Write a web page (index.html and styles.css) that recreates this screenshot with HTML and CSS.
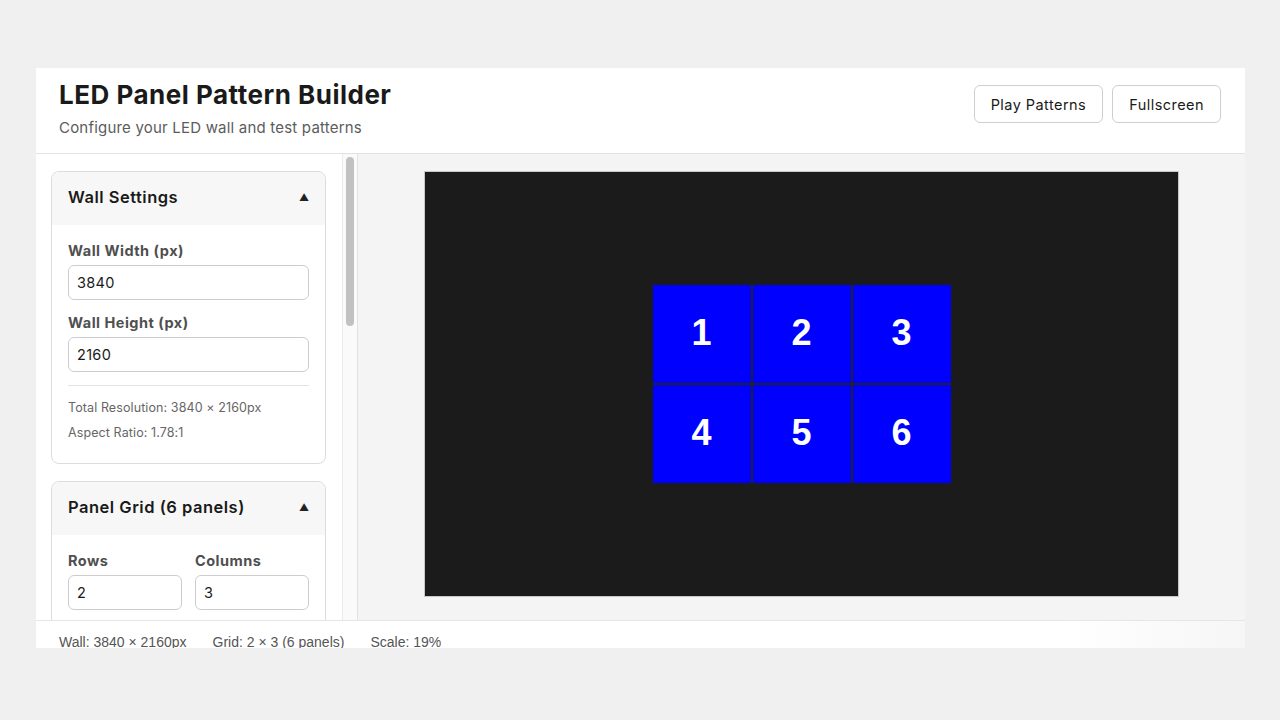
FILE: index.html
```html
<!DOCTYPE html>
<html lang="en">
<head>
<meta charset="utf-8">
<title>LED Panel Pattern Builder</title>
<link rel="stylesheet" href="styles.css">
</head>
<body>
<div class="app">
  <header class="topbar">
    <div class="titles">
      <h1>LED Panel Pattern Builder</h1>
      <p class="subtitle">Configure your LED wall and test patterns</p>
    </div>
    <div class="actions">
      <button class="btn">Play Patterns</button>
      <button class="btn">Fullscreen</button>
    </div>
  </header>
  <div class="workspace">
    <aside class="sidebar">
      <div class="sidebar-content">
        <section class="card">
          <div class="card-head"><h2>Wall Settings</h2><span class="caret">▲</span></div>
          <div class="card-body">
            <label class="field">
              <span class="label">Wall Width (px)</span>
              <input class="input" type="text" value="3840">
            </label>
            <label class="field">
              <span class="label">Wall Height (px)</span>
              <input class="input" type="text" value="2160">
            </label>
            <div class="info">
              <p>Total Resolution: 3840 × 2160px</p>
              <p>Aspect Ratio: 1.78:1</p>
            </div>
          </div>
        </section>
        <section class="card">
          <div class="card-head"><h2>Panel Grid (6 panels)</h2><span class="caret">▲</span></div>
          <div class="card-body">
            <div class="pair">
              <label class="field">
                <span class="label">Rows</span>
                <input class="input" type="text" value="2">
              </label>
              <label class="field">
                <span class="label">Columns</span>
                <input class="input" type="text" value="3">
              </label>
            </div>
          </div>
        </section>
      </div>
      <div class="scrolltrack"><div class="thumb"></div></div>
    </aside>
    <main class="stage">
      <div class="wall">
        <div class="panels">
          <div class="panel">1</div>
          <div class="panel">2</div>
          <div class="panel">3</div>
          <div class="panel">4</div>
          <div class="panel">5</div>
          <div class="panel">6</div>
        </div>
      </div>
    </main>
  </div>
  <footer class="status">
    <span>Wall: 3840 × 2160px</span>
    <span>Grid: 2 × 3 (6 panels)</span>
    <span>Scale: 19%</span>
  </footer>
</div>
</body>
</html>
```
FILE: styles.css
```css
* { box-sizing: border-box; }
html, body { margin: 0; padding: 0; }
body {
  background: #f0f0f0;
  font-family: "Inter", "Noto Sans", sans-serif;
  color: #1a1a1a;
  width: 1280px;
  height: 720px;
  overflow: hidden;
}
.app {
  margin: 68px 35px 0 36px;
  width: 1209px;
  height: 580px;
  background: #fff;
  display: flex;
  flex-direction: column;
  overflow: hidden;
}
.topbar {
  height: 86px;
  flex: none;
  display: flex;
  justify-content: space-between;
  align-items: flex-start;
  padding: 13px 24px 0 23px;
  border-bottom: 1px solid #e2e2e2;
}
h1 {
  margin: 0;
  font-size: 26px;
  font-weight: 700;
  letter-spacing: 0.5px;
  line-height: 28px;
  color: #1a1a1a;
}
.subtitle {
  margin: 10px 0 0;
  font-size: 15px;
  letter-spacing: 0.2px;
  color: #5c5c5c;
  line-height: 18px;
}
.actions {
  display: flex;
  gap: 9px;
  padding-top: 4px;
}
.btn {
  height: 38px;
  padding: 0 16px;
  border: 1px solid #cfcfcf;
  border-radius: 6px;
  background: #fff;
  font-family: inherit;
  font-size: 14.5px;
  letter-spacing: 0.45px;
  color: #1a1a1a;
}
.workspace {
  flex: none;
  height: 466px;
  display: flex;
  min-height: 0;
}
.sidebar {
  width: 322px;
  flex: none;
  display: flex;
  border-right: 1px solid #e2e2e2;
  background: #fff;
}
.sidebar-content {
  flex: 1;
  padding: 17px 16px 0 15px;
  display: flex;
  flex-direction: column;
  gap: 17px;
  overflow: hidden;
}
.scrolltrack {
  width: 15px;
  flex: none;
  background: #fafafa;
  border-left: 1px solid #ececec;
  padding: 3px 3px 0 3px;
}
.thumb {
  width: 8px;
  height: 169px;
  border-radius: 4px;
  background: #c1c1c1;
}
.card {
  border: 1px solid #dcdcdc;
  border-radius: 8px;
  overflow: hidden;
  flex: none;
}
.card-head {
  height: 53px;
  background: #f7f7f7;
  display: flex;
  align-items: center;
  justify-content: space-between;
  padding: 0 16px 3px;
}
.card-head h2 {
  margin: 0;
  font-size: 16.5px;
  font-weight: 600;
  letter-spacing: 0.5px;
  color: #1a1a1a;
}
.caret {
  font-size: 10px;
  color: #222;
}
.card-body {
  padding: 17px 16px 19px;
}
.field {
  display: flex;
  flex-direction: column;
  margin-bottom: 14px;
}
.label {
  font-size: 14.5px;
  font-weight: 700;
  letter-spacing: 0.5px;
  color: #4f4f4f;
  line-height: 18px;
  margin-bottom: 5px;
}
.input {
  height: 35px;
  border: 1px solid #cdcdcd;
  border-radius: 6px;
  padding: 0 8px;
  font-family: inherit;
  font-size: 14.5px;
  letter-spacing: 0.3px;
  color: #1a1a1a;
  width: 100%;
  background: #fff;
}
.info {
  border-top: 1px solid #e2e2e2;
  margin-top: -1px;
  padding-top: 14px;
}
.info p {
  margin: 0 0 9px;
  font-size: 12.5px;
  letter-spacing: 0.1px;
  line-height: 16px;
  color: #666;
}
.info p:last-child { margin-bottom: 3px; }
.pair {
  display: grid;
  grid-template-columns: 1fr 1fr;
  gap: 13px;
}
.stage {
  flex: 1;
  background: #f4f4f4;
  display: flex;
  justify-content: center;
  align-items: flex-start;
  padding-top: 17px;
}
.wall {
  width: 755px;
  height: 426px;
  background: #1b1b1b;
  border: 1px solid #c8c8c8;
  display: flex;
  align-items: center;
  justify-content: center;
}
.panels {
  display: grid;
  grid-template-columns: repeat(3, 98px);
  grid-template-rows: repeat(2, 98px);
  gap: 2px;
  background: #222;
}
.panel {
  background: #0000ff;
  color: #fff;
  font-family: "Liberation Sans", Arial, sans-serif;
  font-weight: 700;
  font-size: 36px;
  padding-bottom: 3px;
  display: flex;
  align-items: center;
  justify-content: center;
}
.status {
  height: 40px;
  flex: none;
  border-top: 1px solid #e6e6e6;
  background: linear-gradient(to right, #fff 85%, #f6f6f6 100%);
  display: flex;
  gap: 26px;
  padding: 13px 0 0 23px;
  font-family: "Liberation Sans", Arial, sans-serif;
  font-size: 14px;
  color: #555;
}
.status span {
  display: inline-block;
}
```
